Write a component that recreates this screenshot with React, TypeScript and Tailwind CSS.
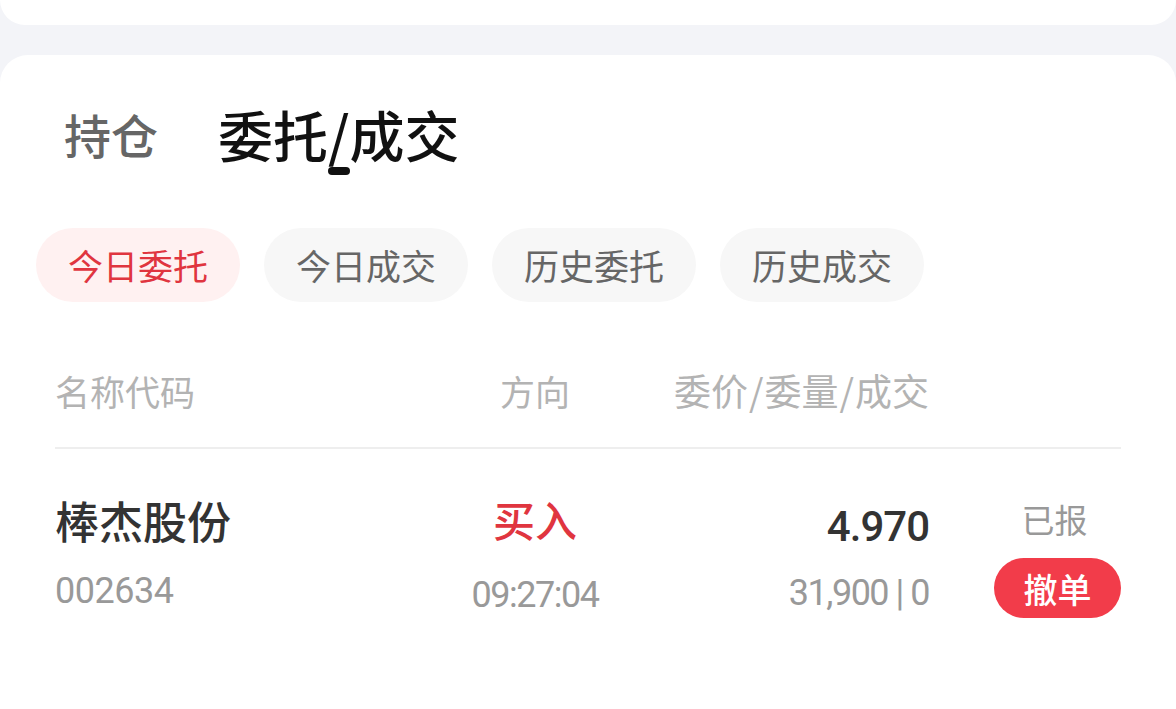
import React, { useState } from 'react';

const cjk = { fontFamily: '"Noto Sans CJK SC", "Noto Sans", sans-serif' };
const num = { fontFamily: 'Roboto, "Noto Sans CJK SC", sans-serif' };

const filters = ['今日委托', '今日成交', '历史委托', '历史成交'];

export default function App() {
  const [active, setActive] = useState(0);

  return (
    <div className="w-[1176px] h-[709px] overflow-hidden bg-[#f3f4f8]" style={cjk}>
      <div className="h-[25px] bg-white rounded-b-[26px]" />

      <div className="mt-[30px] h-[654px] bg-white rounded-t-[28px] px-[55px]">
        {/* main tabs */}
        <div className="flex items-start pt-[51px] ml-[9px] gap-[60px]">
          <div className="text-[47px] leading-none font-medium text-[#666666] pt-[4px]">持仓</div>
          <div className="flex flex-col items-center">
            <div className="text-[55px] leading-none font-medium text-[#111111]">委托/成交</div>
            <div className="mt-[6px] w-[22px] h-[8px] rounded-full bg-[#111111]" />
          </div>
        </div>

        {/* filter pills */}
        <div className="flex gap-[24px] mt-[53px] -ml-[19px]">
          {filters.map((f, i) => (
            <button
              key={f}
              onClick={() => setActive(i)}
              className={
                i === active
                  ? 'w-[204px] h-[74px] rounded-full bg-[#fff1f1] text-[#e0353f] text-[35px]'
                  : 'w-[204px] h-[74px] rounded-full bg-[#f7f7f7] text-[#666666] text-[35px]'
              }
            >
              {f}
            </button>
          ))}
        </div>

        {/* table header */}
        <div className="flex items-center h-[60px] mt-[58px] text-[35px] text-[#b3b3b3] leading-none">
          <div className="w-[400px]">名称代码</div>
          <div className="w-[160px] text-center">方向</div>
          <div className="w-[314px] flex justify-end items-center text-[37px]">
            委价<span className="mx-[1px]">/</span>委量<span className="mx-[1px]">/</span>成交
          </div>
        </div>
        <div className="mt-[27px] h-[2px] bg-[#eeeeee]" />

        {/* order row */}
        <div className="flex items-start pt-[49px]">
          <div className="w-[400px] flex flex-col">
            <div className="text-[44px] leading-none font-medium text-[#333333]">棒杰股份</div>
            <div className="mt-[31px] text-[36px] leading-none tracking-[-0.5px] text-[#999999]" style={num}>002634</div>
          </div>
          <div className="w-[160px] flex flex-col items-center">
            <div className="text-[42px] leading-none font-medium text-[#e0353f]">买入</div>
            <div className="mt-[37px] text-[36px] leading-none tracking-[-1.5px] text-[#999999]" style={num}>09:27:04</div>
          </div>
          <div className="w-[314px] flex flex-col items-end">
            <div className="text-[42px] leading-none font-medium tracking-[-1px] text-[#333333] mt-[8px]" style={num}>4.970</div>
            <div className="mt-[27px] text-[36px] leading-none tracking-[-1.5px] text-[#999999]" style={num}>31,900 | 0</div>
          </div>
          <div className="flex-1 flex justify-end">
            <div className="w-[127px] flex flex-col items-center">
              <div className="text-[33px] leading-none text-[#999999] mt-[5px] -ml-[6px]">已报</div>
              <button className="mt-[22px] w-[127px] h-[60px] rounded-full bg-[#f23c4a] text-white text-[34px] font-medium">
                撤单
              </button>
            </div>
          </div>
        </div>
      </div>
    </div>
  );
}
